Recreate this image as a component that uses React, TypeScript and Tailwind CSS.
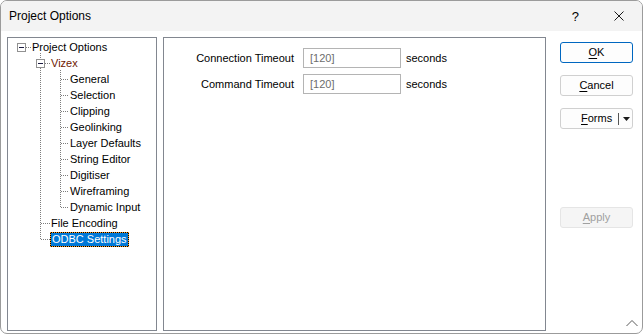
import React from "react";

type Node = {
  label: string;
  indent: string;
  color?: string;
  selected?: boolean;
};

const nodes: Node[] = [
  { label: "Project Options", indent: "pl-[24px]" },
  { label: "Vizex", indent: "pl-[43px]", color: "text-[#6e1800]" },
  { label: "General", indent: "pl-[62px]" },
  { label: "Selection", indent: "pl-[62px]" },
  { label: "Clipping", indent: "pl-[62px]" },
  { label: "Geolinking", indent: "pl-[62px]" },
  { label: "Layer Defaults", indent: "pl-[62px]" },
  { label: "String Editor", indent: "pl-[62px]" },
  { label: "Digitiser", indent: "pl-[62px]" },
  { label: "Wireframing", indent: "pl-[62px]" },
  { label: "Dynamic Input", indent: "pl-[62px]" },
  { label: "File Encoding", indent: "pl-[43px]" },
  { label: "ODBC Settings", indent: "pl-[42px]", selected: true },
];

// row centre (relative to the tree's padding box)
const rowY = (i: number) => 9 + 16 * i + 0.5;

function TreeLines() {
  const dot = { stroke: "#7d7d7d", strokeWidth: 1, strokeDasharray: "1 1" };
  return (
    <svg className="absolute left-0 top-0 pointer-events-none" width="148" height="292">
      {/* root */}
      <line x1="18" x2="23" y1={rowY(0)} y2={rowY(0)} {...dot} />
      <rect x="9.5" y="5.5" width="8" height="8" fill="#fff" stroke="#919191" />
      <line x1="11" x2="16" y1="9.5" y2="9.5" stroke="#1a1a40" />
      {/* level 1 vertical */}
      <line x1="32.5" x2="32.5" y1="15" y2="21" {...dot} />
      <line x1="32.5" x2="32.5" y1="30" y2={rowY(12)} {...dot} />
      {/* vizex */}
      <line x1="37" x2="42" y1={rowY(1)} y2={rowY(1)} {...dot} />
      <rect x="28.5" y="21.5" width="8" height="8" fill="#fff" stroke="#919191" />
      <line x1="30" x2="35" y1="25.5" y2="25.5" stroke="#1a1a40" />
      <line x1="33" x2="42" y1={rowY(11)} y2={rowY(11)} {...dot} />
      <line x1="33" x2="42" y1={rowY(12)} y2={rowY(12)} {...dot} />
      {/* level 2 */}
      <line x1="52.5" x2="52.5" y1="32" y2={rowY(10)} {...dot} />
      {[2, 3, 4, 5, 6, 7, 8, 9, 10].map((i) => (
        <line key={i} x1="53" x2="61" y1={rowY(i)} y2={rowY(i)} {...dot} />
      ))}
    </svg>
  );
}

function Btn({
  children,
  primary,
  disabled,
  className = "",
}: {
  children: React.ReactNode;
  primary?: boolean;
  disabled?: boolean;
  className?: string;
}) {
  const tone = primary
    ? "border-[#0067c0] bg-[#fdfdfd] text-black"
    : disabled
    ? "border-[#e5e5e5] bg-[#f5f5f5] text-[#a0a0a0]"
    : "border-[#d0d0d0] bg-[#fdfdfd] text-black";
  return (
    <div
      className={`w-[73px] h-[21px] rounded-[3px] border flex items-center justify-center text-[11px] ${tone} ${className}`}
    >
      {children}
    </div>
  );
}

export default function App() {
  return (
    <div
      className="w-[643px] h-[334px] bg-white border border-[#9b9b9b] rounded-[7px] overflow-hidden flex flex-col relative"
      style={{ fontFamily: '"Liberation Sans", Arial, sans-serif' }}
    >
      {/* Title bar */}
      <div className="h-[30px] shrink-0 bg-[#f3f3f3] flex items-center pl-[8px] text-[12px] text-black">
        <span>Project Options</span>
        <span className="ml-auto mr-[35px] text-[13px] leading-none">?</span>
        <svg width="10" height="10" className="mr-[18px]" viewBox="0 0 10 10">
          <path d="M0.5 0.5 L9.5 9.5 M9.5 0.5 L0.5 9.5" stroke="#1a1a1a" strokeWidth="1" />
        </svg>
      </div>

      {/* Body */}
      <div className="flex pt-[6px] pl-[6px]">
        {/* Tree */}
        <div className="w-[150px] h-[294px] border border-[#828790] relative bg-white">
          <TreeLines />
          <div className="pt-[1px] flex flex-col text-[11px] text-black">
            {nodes.map((n) => (
              <div key={n.label} className={`h-4 flex items-center ${n.indent}`}>
                {n.selected ? (
                  <span className="bg-black inline-flex">
                    <span className="h-[15px] px-[1px] flex items-center bg-[#0078d7] bg-clip-padding border border-dotted border-[#ff9a1e] text-white">
                      {n.label}
                    </span>
                  </span>
                ) : (
                  <span className={n.color ?? ""}>{n.label}</span>
                )}
              </div>
            ))}
          </div>
        </div>

        {/* Content */}
        <div className="ml-[6px] w-[383px] h-[294px] border border-[#828790] bg-white pt-[10px]">
          <div className="grid grid-cols-[130px_98px_auto] gap-y-[6px] text-[11px] text-black items-center">
            <span className="text-right">Connection Timeout</span>
            <div className="ml-[9px] w-[98px] h-[20px] border border-[#b4b4b4] flex items-center pl-[6px] text-[#6d6d6d]">
              [120]
            </div>
            <span className="ml-[14px]">seconds</span>
            <span className="text-right">Command Timeout</span>
            <div className="ml-[9px] w-[98px] h-[20px] border border-[#b4b4b4] flex items-center pl-[6px] text-[#6d6d6d]">
              [120]
            </div>
            <span className="ml-[14px]">seconds</span>
          </div>
        </div>

        {/* Buttons */}
        <div className="ml-[14px] pt-[5px] flex flex-col">
          <Btn primary>
            <span className="underline underline-offset-2">O</span>K
          </Btn>
          <Btn className="mt-[12px]">
            <span className="underline underline-offset-2">C</span>ancel
          </Btn>
          <div className="mt-[12px] w-[73px] h-[21px] rounded-[3px] border border-[#d0d0d0] bg-[#fdfdfd] flex items-center text-[11px] text-black">
            <span className="pl-[20px]">
              <span className="underline underline-offset-2">F</span>orms
            </span>
            <span className="ml-[6px] w-px h-[12px] bg-[#555]" />
            <svg width="7" height="4" className="ml-[4px]" viewBox="0 0 7 4">
              <path d="M0 0 H7 L3.5 4 Z" fill="#1a1a1a" />
            </svg>
          </div>
          <Btn disabled className="mt-[78px]">
            <span className="underline underline-offset-2">A</span>pply
          </Btn>
        </div>
      </div>

      {/* resize chevron */}
      <svg width="12" height="8" viewBox="0 0 12 8" className="absolute right-[4px] bottom-[6px]">
        <path d="M0.5 7 L6 1.5 L11.5 7" fill="none" stroke="#5a5a5a" strokeWidth="1" />
      </svg>
    </div>
  );
}
